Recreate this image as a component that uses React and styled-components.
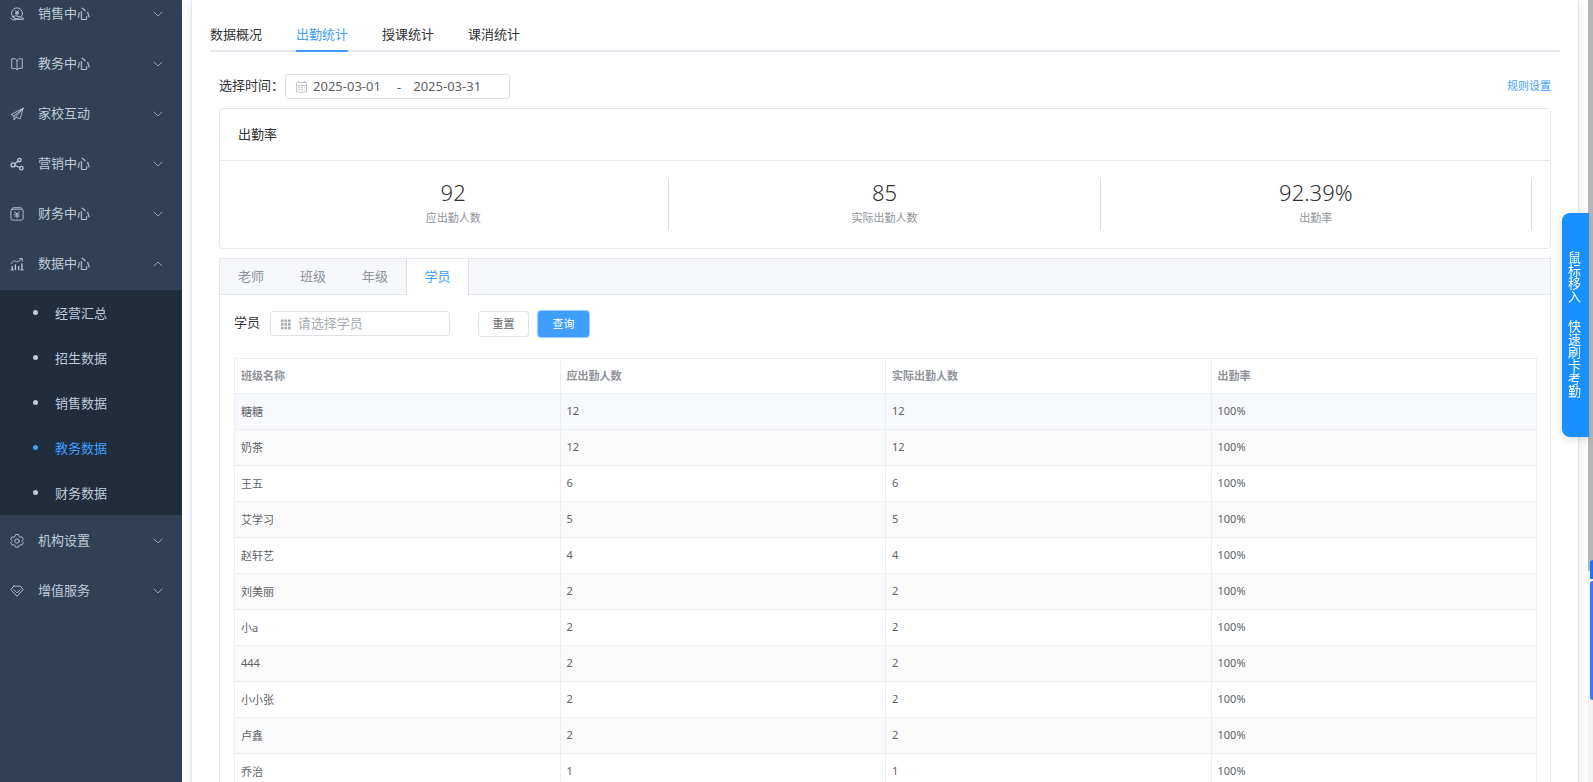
import React from 'react';
import styled, { createGlobalStyle, css } from 'styled-components';

const GlobalStyle = createGlobalStyle`
  * { box-sizing: border-box; }
  html, body, #root { height: 100%; }
  body { margin: 0; overflow: hidden; background: #fff; }
  body, button, input, table {
    font-family: "Noto Sans", "Noto Sans CJK SC", sans-serif;
    font-size: 13px;
    color: #303133;
  }
`;

const Shell = styled.div`
  display: flex;
  height: 100vh;
  overflow: hidden;
`;

const Sidebar = styled.nav`
  flex: 0 0 182px;
  margin-top: -11px;
  background: #304156;
`;

const MenuItem = styled.button`
  display: flex;
  align-items: center;
  width: 100%;
  height: 50px;
  padding: 0 19px 0 10px;
  border: 0;
  background: none;
  color: #bfcbd9;
  text-align: left;
`;

const MenuLabel = styled.span`
  flex: 1;
  padding: 0 0 3px 14px;
`;

const SubMenu = styled.ul`
  list-style: none;
  margin: 1px 0;
  padding: 0;
  background: #1f2d3d;
`;

const SubLink = styled.a`
  display: flex;
  align-items: center;
  gap: 17px;
  height: 45px;
  padding-left: 33px;
  text-decoration: none;
  color: ${(p) => (p.$active ? '#409eff' : '#bfcbd9')};
  &::before {
    content: '';
    width: 5px;
    height: 5px;
    border-radius: 50%;
    background: currentColor;
  }
`;

const Main = styled.main`
  flex: 1;
  min-width: 0;
  padding: 0 9px;
  overflow: hidden;
`;

const Page = styled.section`
  min-height: 100%;
  padding: 20px 18px 0;
  border: solid #e4e7ed;
  border-width: 0 1px;
  box-shadow: 0 2px 12px rgba(0, 0, 0, 0.1);
`;

const TopTabs = styled.div`
  display: flex;
  gap: 34px;
  height: 32px;
  border-bottom: 2px solid #e4e7ed;
`;

const TopTab = styled.button`
  height: 32px;
  padding: 0 0 4px;
  border: 0;
  border-bottom: 2px solid ${(p) => (p.$active ? '#409eff' : 'transparent')};
  background: none;
  color: ${(p) => (p.$active ? '#409eff' : '#303133')};
`;

const Body = styled.div`
  padding: 22px 9px 0;
`;

const Row = styled.div`
  display: flex;
  align-items: center;
  height: 25px;
`;

const FieldLabel = styled.label`
  padding: 0 ${(p) => p.$gap}px 4px 0;
`;

const Field = styled.div`
  display: flex;
  align-items: center;
  width: ${(p) => p.$width}px;
  height: 25px;
  padding: 0 9px;
  border: 1px solid #dcdfe6;
  border-radius: 3px;
  color: #606266;
`;

const FieldInput = styled.input`
  width: ${(p) => (p.$width ? `${p.$width}px` : '100%')};
  min-width: 0;
  height: 20px;
  padding: 0 0 2px;
  margin-left: ${(p) => p.$gap}px;
  border: 0;
  outline: 0;
  background: none;
  color: #606266;
  &::placeholder { color: #a8abb2; opacity: 1; }
`;

const RuleLink = styled.a`
  margin-left: auto;
  padding-bottom: 3px;
  font-size: 11px;
  color: #409eff;
  text-decoration: none;
`;

const Card = styled.section`
  margin-top: 9px;
  border: 1px solid #e4e7ed;
  border-radius: ${(p) => (p.$square ? 0 : 4)}px;
`;

const CardTitle = styled.h2`
  margin: 0;
  padding: 0 18px;
  border-bottom: 1px solid #e4e7ed;
  font-size: 13px;
  font-weight: 400;
  line-height: 51px;
`;

const Stats = styled.dl`
  display: flex;
  margin: 0;
  padding: 18px;
`;

const Stat = styled.div`
  display: flex;
  flex: 1;
  flex-direction: column-reverse;
  height: 51px;
  border-right: 1px solid #dcdfe6;
  text-align: center;
`;

const StatValue = styled.dd`
  margin: 0;
  font-size: 22px;
  font-weight: 300;
  line-height: 27px;
`;

const StatLabel = styled.dt`
  font-size: 11px;
  line-height: 24px;
  color: #909399;
`;

const InnerTabs = styled.div`
  display: flex;
  height: 36px;
  border-bottom: 1px solid #e4e7ed;
  background: #f5f7fa;
`;

const InnerTab = styled.button`
  width: ${(p) => (p.$active ? 63 : 62)}px;
  height: 36px;
  padding: 0 0 4px;
  border: 0;
  background: none;
  color: #909399;
  ${(p) => p.$active && css`
    border: solid #dcdfe6;
    border-width: 0 1px;
    background: #fff;
    color: #409eff;
  `}
`;

const Pane = styled.div`
  padding: 16px 13px 16px 14px;
`;

const Button = styled.button`
  width: 51px;
  height: 26px;
  margin-left: ${(p) => (p.$primary ? 9 : 28)}px;
  padding: 0 0 2px;
  border: 1px solid ${(p) => (p.$primary ? '#409eff' : '#dcdfe6')};
  border-radius: 3px;
  background: ${(p) => (p.$primary ? '#409eff' : '#fff')};
  box-shadow: ${(p) => (p.$primary ? '0 0 0 1px #a0cfff' : 'none')};
  color: ${(p) => (p.$primary ? '#fff' : '#606266')};
  font-size: 11px;
`;

const Table = styled.table`
  width: 100%;
  margin-top: 22px;
  border-collapse: collapse;
  table-layout: fixed;
  font-size: 11px;
  th, td {
    height: 36px;
    padding: 0 6px 2px;
    border: 1px solid #ebeef5;
    text-align: left;
    color: #606266;
  }
  th { height: 35px; color: #909399; font-weight: 700; }
  th:first-child { width: calc(25% - 1px); }
  tbody tr:nth-child(even) { background: #fafafa; }
  tbody tr:first-child { background: #f7f9fc; }
`;

const ScrollTrack = styled.div`
  flex: 0 0 5px;
  background: #f1f1f1;
`;

const ScrollThumb = styled.div`
  height: 73%;
  background: #b5b5b5;
`;

const SwipeTab = styled.button`
  position: fixed;
  top: 213px;
  right: 4px;
  display: flex;
  align-items: center;
  justify-content: center;
  gap: 17px;
  width: 27px;
  height: 224px;
  padding: 0 3px 2px 0;
  border: 0;
  border-radius: 8px 0 0 8px;
  background: #1890ff;
  box-shadow: 0 2px 8px rgba(0, 0, 0, 0.15);
  color: #fff;
  line-height: 24px;
  writing-mode: vertical-rl;
`;

const HelpDock = styled.div`
  position: fixed;
  top: 560px;
  right: 0;
  width: 3px;
`;

const HelpPart = styled.div`
  height: ${(p) => p.$height}px;
  margin-bottom: 2px;
  border-radius: ${(p) => p.$radius};
  background: ${(p) => p.$color};
`;

const Icon = ({ size = 14, box = 16, width = 1, children }) => (
  <svg width={size} height={size} viewBox={`0 0 ${box} ${box}`} fill="none" stroke="currentColor"
    strokeWidth={width} strokeLinecap="round" strokeLinejoin="round" aria-hidden="true">
    {children}
  </svg>
);

const icons = {
  sales: (
    <>
      <circle cx="8" cy="7.2" r="6.2" />
      <path d="M6.2 3.8 8 6l1.8-2.2M8 6v3.5M6.2 6.2h3.6M6.2 7.8h3.6" />
      <path d="M3.2 11.2c1.6 2 3.2 2.9 5.4 3h6.6v-1.6h-2.6M1 12.6l1.6 2h4M3.2 11.2c2-1.4 4-1.4 5.2-.4h2.8" />
    </>
  ),
  book: <path d="M8 4C7 2.600 6 2 4.600 2H2v11h3c1.600 0 2.500.5 3 1.500.5-1 1.400-1.500 3-1.500h3V2h-2.600C10 2 9 2.600 8 4zM8 4v10" />,
  plane: <path d="M15 1.500 1.200 8.600l3.300 1.700L15 1.500l-8.600 10 5.300 2L15 1.500zM4.500 10.300V15l2.400-3.300" />,
  share: (
    <g strokeWidth="1.5">
      <circle cx="3.500" cy="9" r="2.200" />
      <circle cx="10.800" cy="3.500" r="1.900" />
      <circle cx="13" cy="12.800" r="2" />
      <path d="m5.300 7.700 4-3M5.600 9.700l5.500 2.300" />
    </g>
  ),
  finance: (
    <>
      <rect x="1" y="2.500" width="14" height="12.500" rx="2" />
      <path d="M2.200 2.200C2.400 1 3 .8 4 .8h8c1 0 1.600.2 1.800 1.400" />
      <path d="M5.400 5.200 8 8l2.600-2.800M8 8v4.500M5.400 8.200h5.200M5.400 10.300h5.200" />
    </>
  ),
  chart: (
    <>
      <path d="M1.500 7.500c1-2.500 3-4 4.800-2.600C8.500 6.500 10 5 13.500 2M10.800 1.800h3.200v2.800" />
      <path strokeWidth="1.500" d="M2.500 14.500V11M6.200 14.500V9M9.900 14.500V11M13.600 14.500V8" />
      <path d="M1 14.700h3M12.200 14.700h3" />
    </>
  ),
  gear: (
    <>
      <circle cx="8" cy="8" r="2.500" />
      <path d="m6.300 1-.6 1.900-1.300.8-2-.4L.8 6.100l1.300 1.400v1.100L.8 9.900l1.600 2.800 2-.4 1.300.8.6 1.900h3.400l.6-1.900 1.300-.8 2 .4 1.600-2.800-1.300-1.400V7.400l1.300-1.300-1.600-2.800-2 .4-1.300-.8L9.700 1z" />
    </>
  ),
  diamond: <path d="M4 2.500h8l3 4-7 7.500-7-7.500 3-4zM4.300 6.500 8 10.200l3.700-3.700" />,
};

const Chevron = ({ up }) => (
  <Icon size={10} box={10} width={0.7}>
    <path d={up ? 'M1 7l4-4 4 4' : 'M1 3l4 4 4-4'} />
  </Icon>
);

const CalendarIcon = () => (
  <svg width="13" height="13" viewBox="0 0 13 13" fill="none" stroke="#c0c4cc" aria-hidden="true">
    <path d="M1.500 2.500h10v9.500h-10zM1.500 5.500h10M3.500 1v2M9.500 1v2" />
    <path d="M3 7.500h7M3 9.500h7" strokeDasharray="2 1" />
  </svg>
);

const GridIcon = () => (
  <svg width="12" height="12" viewBox="0 0 12 12" fill="#a8abb2" aria-hidden="true">
    {[1, 5, 9].map((x) => [1, 5, 9].map((y) => <rect key={`${x}-${y}`} x={x} y={y} width="3" height="3" />))}
  </svg>
);

const menu = [
  ['sales', '销售中心'],
  ['book', '教务中心'],
  ['plane', '家校互动'],
  ['share', '营销中心'],
  ['finance', '财务中心'],
  ['chart', '数据中心', ['经营汇总', '招生数据', '销售数据', '教务数据', '财务数据']],
  ['gear', '机构设置'],
  ['diamond', '增值服务'],
];

const students = [
  ['糖糖', 12], ['奶茶', 12], ['王五', 6], ['艾学习', 5], ['赵轩艺', 4], ['刘美丽', 2],
  ['小a', 2], ['444', 2], ['小小张', 2], ['卢鑫', 2], ['乔治', 1],
];

export default function App() {
  return (
    <Shell>
      <GlobalStyle />
      <Sidebar>
        {menu.map(([icon, label, children]) => (
          <React.Fragment key={label}>
            <MenuItem type="button" aria-expanded={Boolean(children)}>
              <Icon>{icons[icon]}</Icon>
              <MenuLabel>{label}</MenuLabel>
              <Chevron up={Boolean(children)} />
            </MenuItem>
            {children && (
              <SubMenu>
                {children.map((name) => (
                  <li key={name}><SubLink href="#" $active={name === '教务数据'}>{name}</SubLink></li>
                ))}
              </SubMenu>
            )}
          </React.Fragment>
        ))}
      </Sidebar>

      <Main>
        <Page>
          <TopTabs role="tablist">
            {['数据概况', '出勤统计', '授课统计', '课消统计'].map((t) => (
              <TopTab key={t} type="button" role="tab" aria-selected={t === '出勤统计'} $active={t === '出勤统计'}>{t}</TopTab>
            ))}
          </TopTabs>
          <Body>
            <Row>
              <FieldLabel htmlFor="from" $gap={1}>选择时间：</FieldLabel>
              <Field $width={225}>
                <CalendarIcon />
                <FieldInput id="from" $width={84} $gap={5} defaultValue="2025-03-01" />
                <span>-</span>
                <FieldInput aria-label="结束日期" $width={84} $gap={12} defaultValue="2025-03-31" />
              </Field>
              <RuleLink href="#">规则设置</RuleLink>
            </Row>

            <Card>
              <CardTitle>出勤率</CardTitle>
              <Stats>
                {[['应出勤人数', '92'], ['实际出勤人数', '85'], ['出勤率', '92.39%']].map(([label, value]) => (
                  <Stat key={label}>
                    <StatLabel>{label}</StatLabel>
                    <StatValue>{value}</StatValue>
                  </Stat>
                ))}
              </Stats>
            </Card>

            <Card $square>
              <InnerTabs role="tablist">
                {['老师', '班级', '年级', '学员'].map((t) => (
                  <InnerTab key={t} type="button" role="tab" aria-selected={t === '学员'} $active={t === '学员'}>{t}</InnerTab>
                ))}
              </InnerTabs>
              <Pane>
                <Row>
                  <FieldLabel htmlFor="student" $gap={10}>学员</FieldLabel>
                  <Field $width={180}>
                    <GridIcon />
                    <FieldInput id="student" $gap={7} placeholder="请选择学员" />
                  </Field>
                  <Button type="button">重置</Button>
                  <Button type="button" $primary>查询</Button>
                </Row>
                <Table>
                  <thead>
                    <tr>
                      <th>班级名称</th>
                      <th>应出勤人数</th>
                      <th>实际出勤人数</th>
                      <th>出勤率</th>
                    </tr>
                  </thead>
                  <tbody>
                    {students.map(([name, count]) => (
                      <tr key={name}>
                        <td>{name}</td>
                        <td>{count}</td>
                        <td>{count}</td>
                        <td>100%</td>
                      </tr>
                    ))}
                  </tbody>
                </Table>
              </Pane>
            </Card>
          </Body>
        </Page>
      </Main>

      <ScrollTrack><ScrollThumb /></ScrollTrack>
      <SwipeTab type="button"><span>鼠标移入</span><span>快速刷卡考勤</span></SwipeTab>
      <HelpDock>
        <HelpPart $height={19} $radius="3px 0 0 0" $color="#1677ff" />
        <HelpPart $height={119} $radius="3px 0 0 3px" $color="#3b78f5" />
      </HelpDock>
    </Shell>
  );
}
